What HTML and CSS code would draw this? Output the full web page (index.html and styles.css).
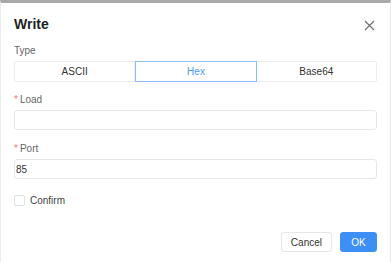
FILE: index.html
```html
<!DOCTYPE html>
<html lang="en">
<head>
    <meta charset="UTF-8">
    <title>Write</title>
    <link rel="stylesheet" href="styles.css">
</head>
<body>
    <div class="dialog">
        <div class="dialog-header">
            <h2>Write</h2>
            <button class="close-btn" aria-label="Close">
                <svg width="11" height="11" viewBox="0 0 11 11">
                    <path d="M1 1 L10 10 M10 1 L1 10" stroke="#6c7077" stroke-width="1.2" fill="none"/>
                </svg>
            </button>
        </div>

        <div class="field field-type">
            <label class="field-label">Type</label>
            <div class="segmented">
                <div class="segment">ASCII</div>
                <div class="segment active">Hex</div>
                <div class="segment">Base64</div>
            </div>
        </div>

        <div class="field">
            <label class="field-label"><span class="req">*</span>Load</label>
            <input type="text" class="text-input" value="">
        </div>

        <div class="field field-port">
            <label class="field-label"><span class="req">*</span>Port</label>
            <input type="text" class="text-input" value="85">
        </div>

        <div class="check-row">
            <span class="check-box"></span>
            <span class="check-label">Confirm</span>
        </div>

        <div class="dialog-footer">
            <button class="btn">Cancel</button>
            <button class="btn btn-primary">OK</button>
        </div>
    </div>
</body>
</html>
```

FILE: styles.css
```css
body {
    margin: 0;
    padding: 0;
    background: #fff;
    font-family: "Liberation Sans", Arial, sans-serif;
    color: #333;
}
.dialog {
    height: 262px;
    box-sizing: border-box;
    border-top: 3px solid #a9a9a9;
    border-left: 1px solid #ececec;
    border-right: 1px solid #ececec;
    padding: 0 13px;
}
.dialog-header {
    display: flex;
    justify-content: space-between;
    align-items: center;
    padding-top: 11px;
    height: 20px;
}
.dialog-header h2 {
    margin: 0;
    font-size: 14px;
    line-height: 20px;
    font-weight: bold;
    color: #1f1f1f;
}
.close-btn {
    background: none;
    border: none;
    padding: 0;
    margin-right: 2px;
    margin-top: 2px;
    width: 11px;
    height: 11px;
    display: flex;
}
.field {
    margin-top: 11px;
}
.field-type {
    margin-top: 10px;
}
.field-port {
    margin-top: 12px;
}
.field-label {
    display: block;
    font-size: 10px;
    line-height: 14px;
    color: #666;
    margin-bottom: 3px;
}
.req {
    color: #f27c7c;
    font-size: 10px;
    margin-right: 2px;
}
.segmented {
    display: flex;
    height: 21px;
}
.segment {
    flex: 1;
    box-sizing: border-box;
    border: 1px solid #ececec;
    border-left: none;
    font-size: 10px;
    line-height: 19px;
    text-align: center;
    color: #333;
}
.segment:first-child {
    border-left: 1px solid #ececec;
    border-radius: 2px 0 0 2px;
}
.segment:last-child {
    border-radius: 0 2px 2px 0;
}
.segment.active {
    border: 1px solid #8fbdf6;
    color: #4a9af6;
}
.text-input {
    display: block;
    width: 100%;
    height: 20px;
    box-sizing: border-box;
    border: 1px solid #e6e6e6;
    border-radius: 3px;
    padding: 0 6px 0 1px;
    font-family: "Liberation Sans", Arial, sans-serif;
    font-size: 10px;
    color: #333;
    outline: none;
}
.check-row {
    display: flex;
    align-items: center;
    margin-top: 16px;
}
.check-box {
    width: 11px;
    height: 11px;
    box-sizing: border-box;
    border: 1px solid #e0e0e0;
    border-radius: 2px;
}
.check-label {
    font-size: 10px;
    color: #444;
    margin-left: 5px;
}
.dialog-footer {
    display: flex;
    justify-content: flex-end;
    gap: 8px;
    margin-top: 26px;
}
.btn {
    height: 20px;
    padding: 0 9px;
    border: 1px solid #e6e6e6;
    border-radius: 3px;
    background: #fff;
    font-family: "Liberation Sans", Arial, sans-serif;
    font-size: 10px;
    color: #333;
}
.btn-primary {
    background: #3d8ff6;
    border-color: #3d8ff6;
    color: #fff;
    width: 37px;
}
```
